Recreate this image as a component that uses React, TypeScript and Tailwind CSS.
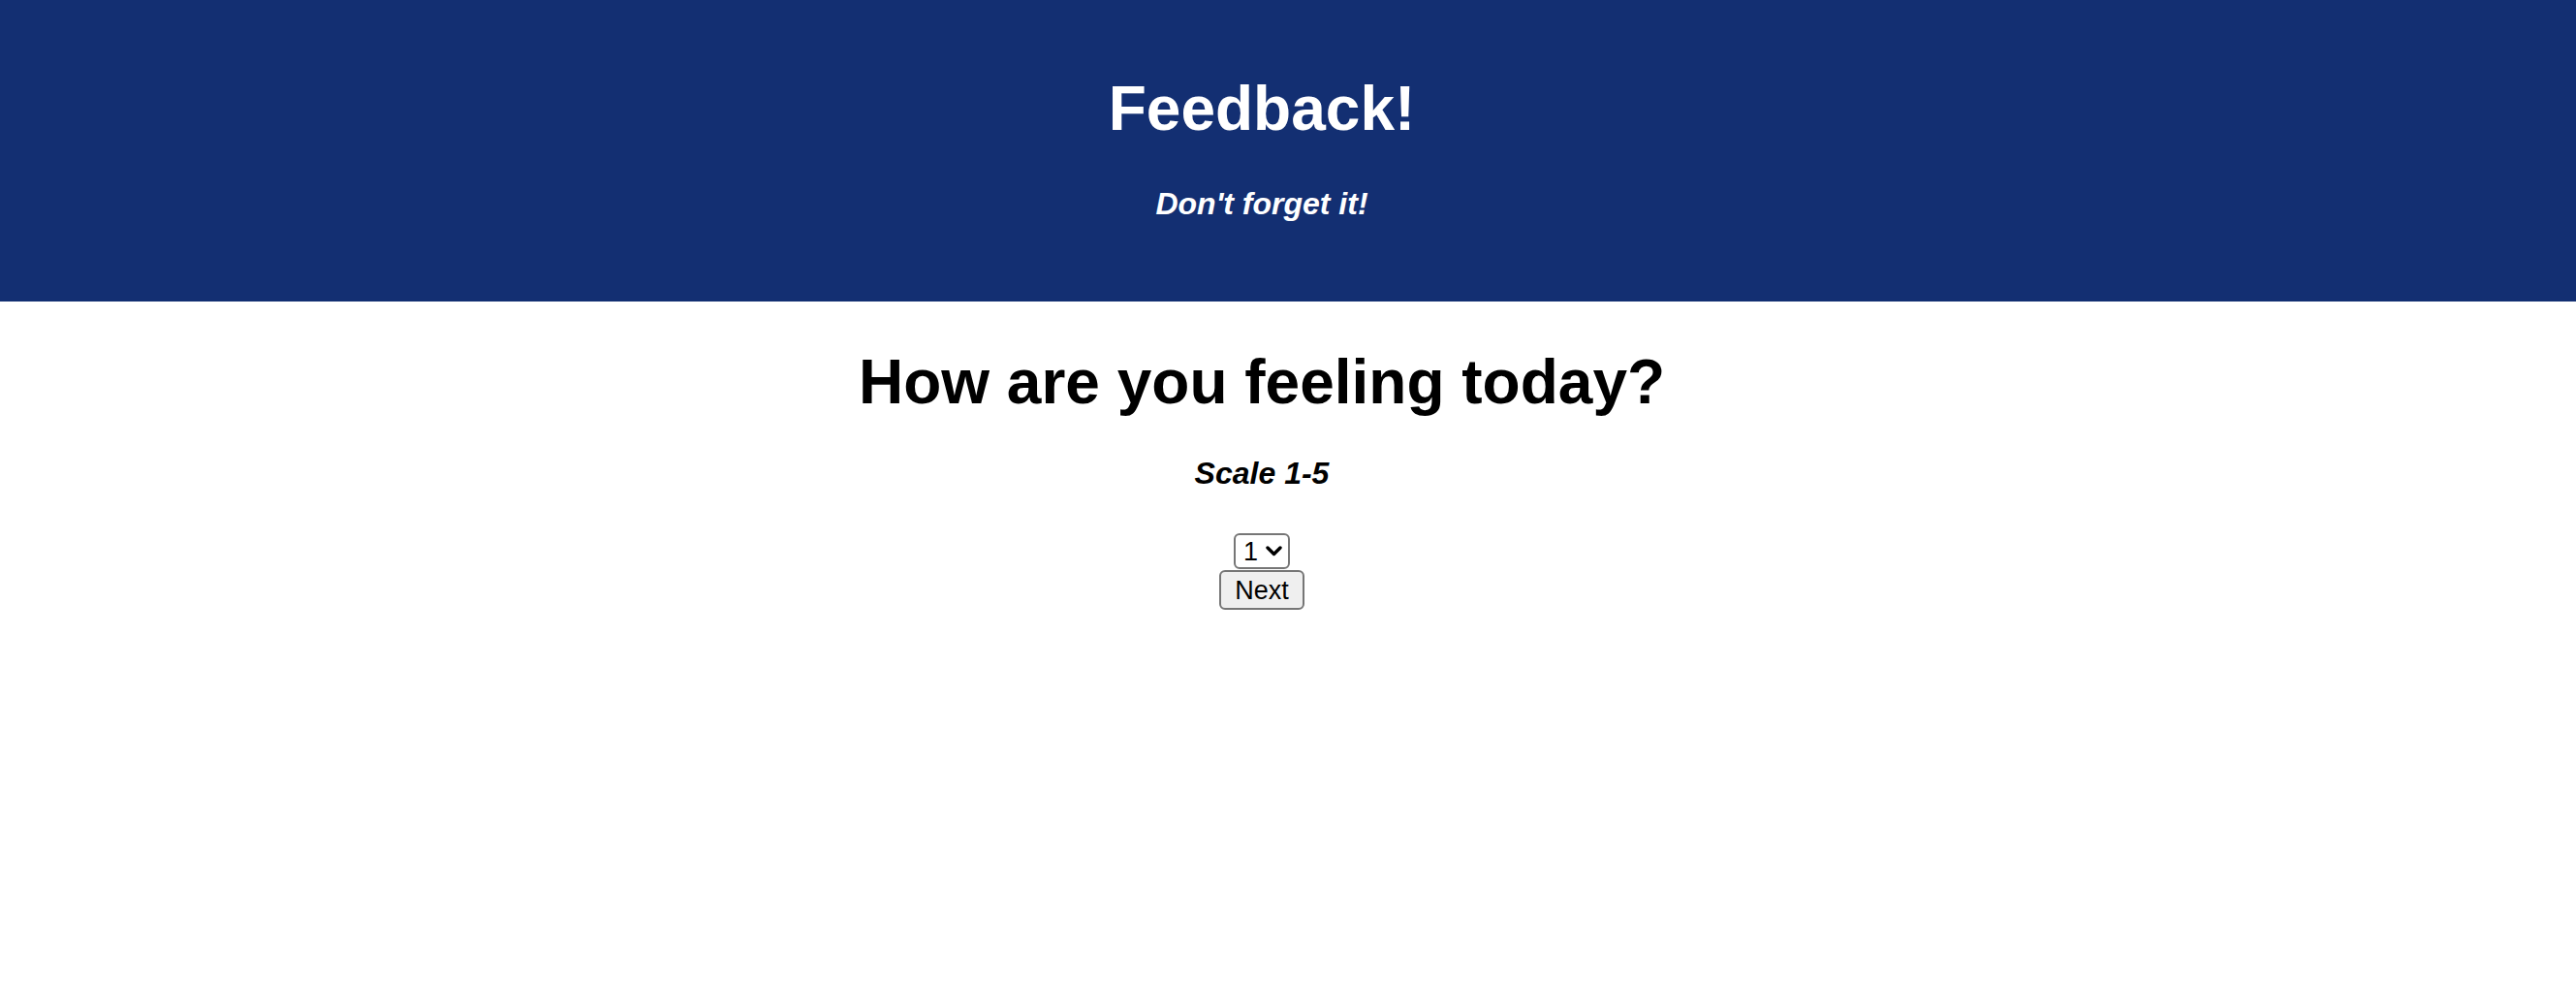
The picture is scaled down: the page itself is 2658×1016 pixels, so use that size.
import { useState } from 'react'

export default function App() {
  const [mood, setMood] = useState('1')

  return (
    <div className="min-h-screen bg-white font-['Liberation_Sans',Arial,sans-serif] text-black">
      {/* Header */}
      <header className="bg-[#132f72] pt-[76px] pb-[83px] pr-[54px] text-center text-white">
        <h1 className="text-[64px] leading-[72px] font-bold">Feedback!</h1>
        <h4 className="mt-[44px] text-[32px] leading-[36px] font-bold italic">
          Don't forget it!
        </h4>
      </header>

      {/* Question */}
      <main className="flex flex-col items-center pr-[54px] text-center">
        <h1 className="mt-[47px] text-[64px] leading-[72px] font-bold">
          How are you feeling today?
        </h1>
        <h4 className="mt-[40px] text-[32px] leading-[36px] font-bold italic">
          Scale 1-5
        </h4>

        <form
          className="mt-[44px] flex flex-col items-center gap-[1px]"
          onSubmit={(e) => e.preventDefault()}
        >
          <div className="relative">
            <select
              value={mood}
              onChange={(e) => setMood(e.target.value)}
              className="h-[37px] w-[58px] appearance-none rounded-[6px] border-2 border-[#767676] bg-white pl-[8px] text-[27px] leading-[30px] text-black"
            >
              <option value="1">1</option>
              <option value="2">2</option>
              <option value="3">3</option>
              <option value="4">4</option>
              <option value="5">5</option>
            </select>
            <svg
              className="pointer-events-none absolute right-[8px] top-[13px]"
              width="17"
              height="11"
              viewBox="0 0 17 11"
              fill="none"
            >
              <path
                d="M2 2 L8.5 8.5 L15 2"
                stroke="black"
                strokeWidth="3.4"
                strokeLinecap="round"
                strokeLinejoin="round"
              />
            </svg>
          </div>
          <button
            type="submit"
            className="h-[41px] w-[88px] rounded-[6px] border-2 border-[#767676] bg-[#efefef] text-[27px] leading-[30px] text-black"
          >
            Next
          </button>
        </form>
      </main>
    </div>
  )
}
